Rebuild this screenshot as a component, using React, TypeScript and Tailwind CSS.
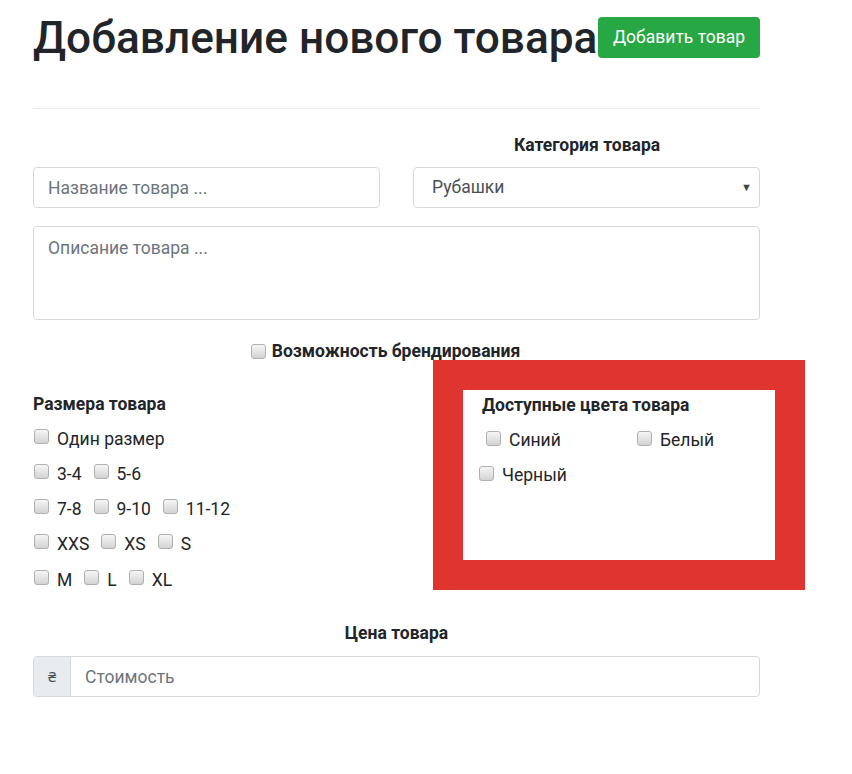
import React from 'react';

const font = "font-['Roboto','Noto_Sans',sans-serif]";

function Box({ className = '' }: { className?: string }) {
    return (
        <span className={`inline-block w-[15px] h-[15px] shrink-0 rounded-[3px] border border-[#b0b0b0] bg-gradient-to-b from-[#f6f6f6] to-[#d3d3d3] ${className}`} />
    );
}

function Check({ label }: { label: string }) {
    return (
        <label className="flex items-center gap-[8px] whitespace-nowrap">
            <Box className="-mt-[5px]" />
            <span>{label}</span>
        </label>
    );
}

const sizeRows = [
    ['Один размер'],
    ['3-4', '5-6'],
    ['7-8', '9-10', '11-12'],
    ['XXS', 'XS', 'S'],
    ['M', 'L', 'XL'],
];

export default function App() {
    return (
        <div className={`${font} bg-white text-[#212529] min-h-[774px] w-[852px]`}>
            <div className="ml-[33px] w-[727px] pt-[12px]">
                {/* header */}
                <div className="flex items-start">
                    <h1 className="text-[44.2px] leading-[53px] font-medium whitespace-nowrap">Добавление нового товара</h1>
                    <button className="ml-auto mt-[5px] h-[41px] w-[162px] shrink-0 whitespace-nowrap rounded-[4px] bg-[#28a745] text-white text-[17.5px]">Добавить товар</button>
                </div>
                <div className="mt-[43px] h-px bg-[#e9e9e9]" />

                {/* name + category */}
                <div className="mt-[26px] flex justify-end">
                    <div className="w-[346px] text-center font-bold text-[17.5px] leading-[20px]">Категория товара</div>
                </div>
                <div className="mt-[12px] flex justify-between">
                    <input
                        placeholder="Название товара ..."
                        className="w-[347px] h-[41px] px-[14px] text-[17.5px] border border-[#d6d9dc] rounded-[4px] placeholder:text-[#6c757d] outline-none"
                    />
                    <div className="relative w-[347px] h-[41px] border border-[#d6d9dc] rounded-[4px] flex items-center pl-[18px] text-[17.5px] text-[#495057]">
                        Рубашки
                        <span className="absolute right-[7px] top-[12px] text-[11px] text-[#444]">▼</span>
                    </div>
                </div>
                <textarea
                    placeholder="Описание товара ..."
                    className="mt-[18px] block w-[727px] h-[94px] px-[14px] py-[8px] text-[17.5px] border border-[#d6d9dc] rounded-[4px] placeholder:text-[#6c757d] resize-none outline-none"
                />

                {/* branding */}
                <div className="mt-[21px] h-[21px] flex items-center justify-center gap-[6px] pr-[22px]">
                    <Box />
                    <span className="font-bold text-[17.5px]">Возможность брендирования</span>
                </div>

                {/* sizes + colors */}
                <div className="flex items-start">
                    <div className="w-[380px] shrink-0 pt-[32px]">
                        <div className="font-bold text-[17.5px] leading-[20px]">Размера товара</div>
                        <div className="mt-[7px] flex flex-col text-[17.5px]">
                            {sizeRows.map((row, i) => (
                                <div key={i} className="h-[35.25px] flex items-center gap-[12px] pl-[1px]">
                                    {row.map(s => <Check key={s} label={s} />)}
                                </div>
                            ))}
                        </div>
                    </div>
                    <div className="ml-[20px] -mt-[2px] w-[372px] h-[230px] shrink-0 border-[30px] border-[#e0342e] bg-white">
                        <div className="pl-[19px] pt-[5px] font-bold text-[17.5px] leading-[20px] whitespace-nowrap">Доступные цвета товара</div>
                        <div className="mt-[8px] flex text-[17.5px] h-[35px] items-center">
                            <div className="w-[174px] pl-[23px]"><Check label="Синий" /></div>
                            <Check label="Белый" />
                        </div>
                        <div className="flex text-[17.5px] h-[35px] items-center pl-[16px]">
                            <Check label="Черный" />
                        </div>
                    </div>
                </div>

                {/* price */}
                <div className="mt-[26px] text-center font-bold text-[17.5px] leading-[20px]">Цена товара</div>
                <div className="mt-[13px] flex h-[41px] border border-[#d6d9dc] rounded-[4px] overflow-hidden">
                    <div className="w-[37px] bg-[#e9ecef] border-r border-[#d6d9dc] flex items-center justify-center text-[15px] text-[#495057]">₴</div>
                    <input
                        placeholder="Стоимость"
                        className="flex-1 px-[14px] text-[17.5px] placeholder:text-[#6c757d] outline-none"
                    />
                </div>
            </div>
        </div>
    );
}
